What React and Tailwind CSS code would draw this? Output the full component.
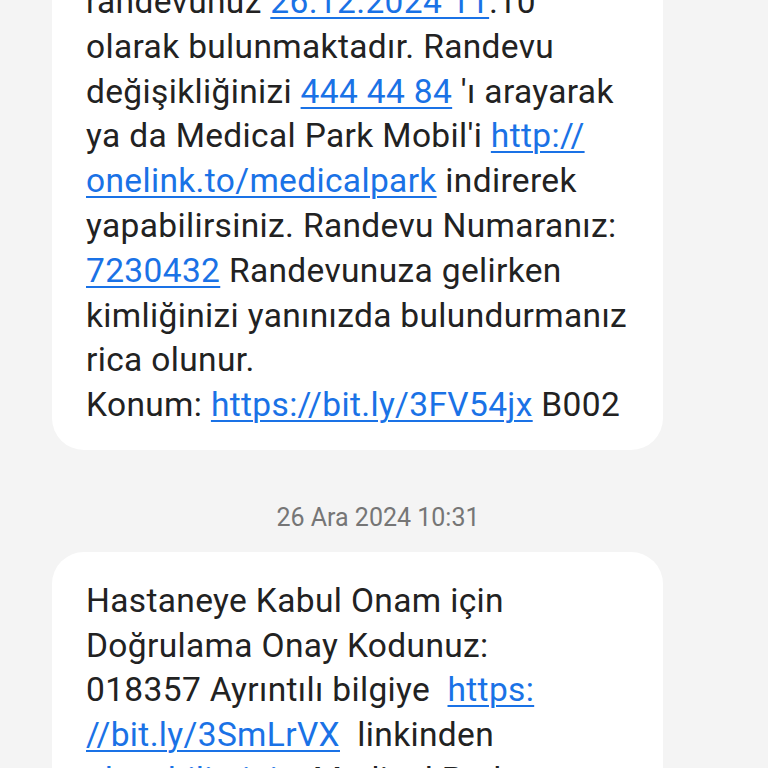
import React from "react";

const L = ({ children }) => (
  <span className="text-[#1a72e6] underline decoration-[1.5px] underline-offset-[4px]">{children}</span>
);

export default function App() {
  return (
    <div className="h-[768px] w-[768px] overflow-hidden bg-[#f4f4f4] font-['Roboto','Noto_Sans',sans-serif]">
      <div className="ml-[52px] mt-[-47px] w-[611px] rounded-[32px] bg-white pl-[34px] pr-[10px] pt-[27px] pb-[22px] text-[33.5px] leading-[44.8px] tracking-[0.35px] text-[#222222] whitespace-pre">
        <div>randevunuz <L>26.12.2024 11</L>:10</div>
        <div>olarak bulunmaktadır. Randevu</div>
        <div>değişikliğinizi <L>444 44 84</L> 'ı arayarak</div>
        <div>ya da Medical Park Mobil'i <L>http://</L></div>
        <div><L>onelink.to/medicalpark</L> indirerek</div>
        <div>yapabilirsiniz. Randevu Numaranız:</div>
        <div><L>7230432</L> Randevunuza gelirken</div>
        <div>kimliğinizi yanınızda bulundurmanız</div>
        <div>rica olunur.</div>
        <div>Konum: <L>https://bit.ly/3FV54jx</L> B002</div>
      </div>
      <div className="mt-[53px] mb-[19px] flex justify-center pr-[12px] text-[25px] leading-[30px] text-[#767676]">
        26 Ara 2024 10:31
      </div>
      <div className="ml-[52px] w-[611px] rounded-[32px] bg-white pl-[34px] pr-[10px] pt-[27px] pb-[22px] text-[33.5px] leading-[44.7px] tracking-[0.35px] text-[#222222] whitespace-pre">
        <div>Hastaneye Kabul Onam için</div>
        <div>Doğrulama Onay Kodunuz:</div>
        <div>018357 Ayrıntılı bilgiye  <L>https:</L></div>
        <div><L>//bit.ly/3SmLrVX</L>  linkinden</div>
        <div><L>ulaşabilirsiniz.</L> Medical Park</div>
        <div>Sağlıklı günler dileriz.</div>
      </div>
    </div>
  );
}
